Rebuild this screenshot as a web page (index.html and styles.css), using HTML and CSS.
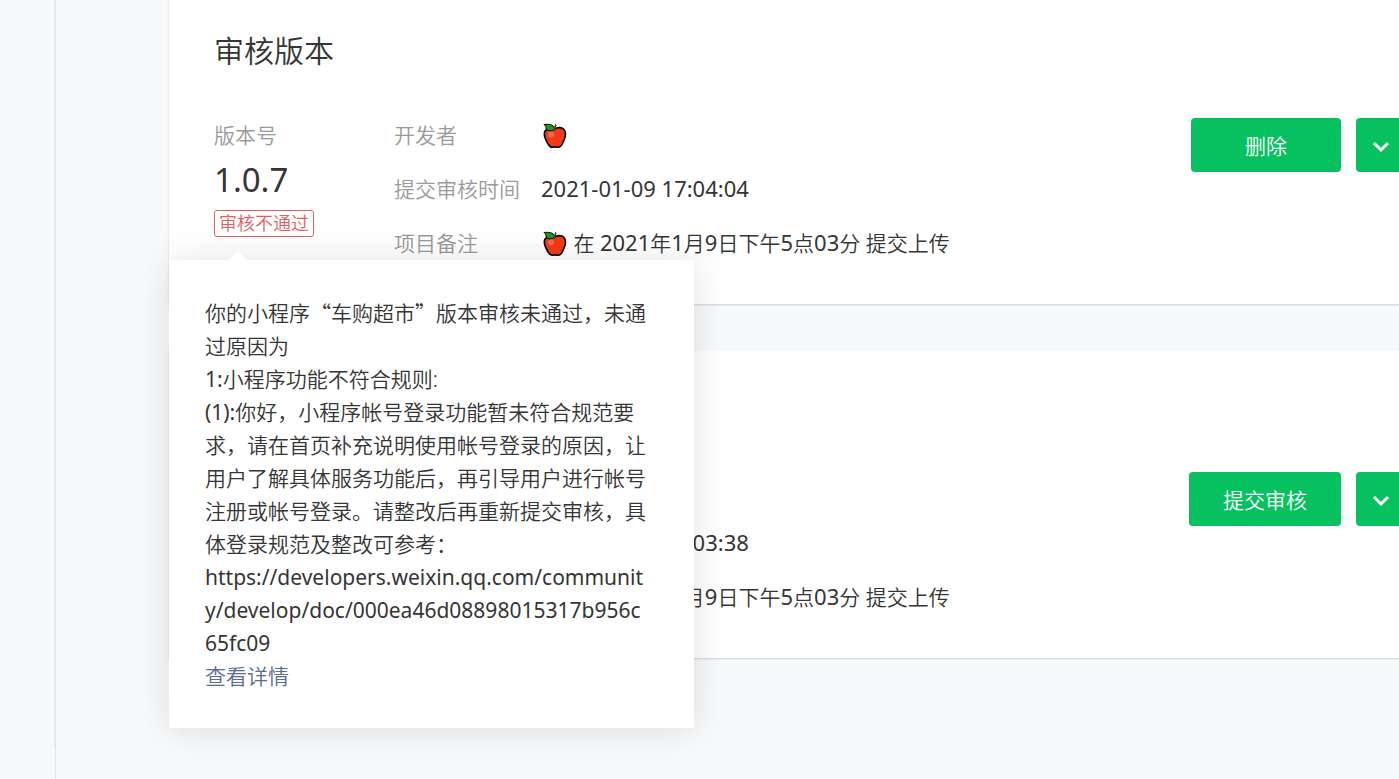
FILE: index.html
```html
<!DOCTYPE html>
<html lang="zh-CN">
<head>
    <meta charset="UTF-8">
    <meta name="viewport" content="width=device-width, initial-scale=1.0">
    <title>版本管理</title>
    <link rel="stylesheet" href="styles.css">
</head>
<body>
    <svg class="defs" aria-hidden="true">
        <symbol id="apple" viewBox="0 0 26 26">
            <path d="M12.5 6.200C15 4.200 19.500 3.800 22 6.500C24.800 9.800 23.300 15 21 19.500C19.500 22.800 17.800 24.800 15.500 24.200C14 23.800 12.500 23.800 11 24.200C8.500 24.800 6.800 22.500 5.200 19.500C3 15.500 1.500 11.500 2.800 8.500C4.500 5.500 8.500 4.500 12.500 6.200Z" fill="#f03a17" stroke="#000" stroke-width="1.600"/>
            <path d="M2 1.500C6 1.200 11.500 .8 12.900 6C10.500 8.500 5.500 8.300 4.200 6C4.200 4 3.200 2.500 2 1.500Z" fill="#13a10e" stroke="#000" stroke-width="1"/>
            <path d="M12.800 7.500C12.400 5 12.800 3.500 14 1.500" fill="none" stroke="#6b2c10" stroke-width="1.600"/>
            <circle cx="9" cy="11.500" r="3" fill="#f4694e"/>
        </symbol>
        <symbol id="arrow" viewBox="0 0 18 12">
            <path d="M2 2L9 9L16 2" fill="none" stroke="#fff" stroke-width="3"/>
        </symbol>
    </svg>
    <div class="page">
        <div class="sidebar"><div class="menu"></div></div>
        <main class="content">
            <section class="card">
                <h2>审核版本</h2>
                <div class="card-body">
                    <div class="version">
                        <div class="label">版本号</div>
                        <div class="number">1.0.7</div>
                        <div class="status">
                            <span class="tag">审核不通过</span>
                            <div class="popover">
                                你的小程序<span class="quote">“</span>车购超市<span class="quote">”</span>版本审核未通过，未通过原因为<br>
                                <span class="latin">1:</span>小程序功能不符合规则:<br>
                                <span class="latin">(1):</span>你好，小程序帐号登录功能暂未符合规范要求，请在首页补充说明使用帐号登录的原因，让用户了解具体服务功能后，再引导用户进行帐号注册或帐号登录。请整改后再重新提交审核，具体登录规范及整改可参考：<br>
                                <span class="latin">https://developers.weixin.qq.com/community/develop/doc/000ea46d08898015317b956c65fc09</span><br>
                                <a href="#">查看详情</a>
                            </div>
                        </div>
                    </div>
                    <dl class="info">
                        <dt>开发者</dt>
                        <dd><svg class="apple"><use href="#apple"/></svg></dd>
                        <dt>提交审核时间</dt>
                        <dd><span class="num">2021-01-09 17:04:04</span></dd>
                        <dt>项目备注</dt>
                        <dd><svg class="apple"><use href="#apple"/></svg> 在 <span class="num">2021</span>年<span class="num">1</span>月<span class="num">9</span>日下午<span class="num">5</span>点<span class="num">03</span>分 提交上传</dd>
                    </dl>
                    <div class="actions">
                        <button class="button" type="button">删除</button>
                        <button class="button more" type="button" aria-label="更多"><svg class="arrow"><use href="#arrow"/></svg></button>
                    </div>
                </div>
            </section>
            <section class="card">
                <h2>开发版本</h2>
                <div class="card-body">
                    <div class="version">
                        <div class="label">版本号</div>
                        <div class="number">1.0.7</div>
                    </div>
                    <dl class="info">
                        <dt>开发者</dt>
                        <dd><svg class="apple"><use href="#apple"/></svg></dd>
                        <dt>提交时间</dt>
                        <dd><span class="num">2021-01-09 17:03:38</span></dd>
                        <dt>项目备注</dt>
                        <dd><svg class="apple"><use href="#apple"/></svg> 在 <span class="num">2021</span>年<span class="num">1</span>月<span class="num">9</span>日下午<span class="num">5</span>点<span class="num">03</span>分 提交上传</dd>
                    </dl>
                    <div class="actions">
                        <button class="button" type="button">提交审核</button>
                        <button class="button more" type="button" aria-label="更多"><svg class="arrow"><use href="#arrow"/></svg></button>
                    </div>
                </div>
            </section>
        </main>
    </div>
</body>
</html>
```
FILE: styles.css
```css
body {
    margin: 0;
    background-color: #f7f9fb;
    color: #353535;
    font-family: "Noto Sans", "Noto Sans CJK SC", sans-serif;
    font-size: 21px;
    font-weight: 350;
    overflow: hidden;
}
.defs {
    position: absolute;
    width: 0;
    height: 0;
}
.page {
    display: flex;
    min-height: 100vh;
}
.sidebar {
    width: 55px;
    border-right: 1px solid #e4e6e9;
}
.menu {
    height: calc(100vh - 31px);
    border-right: 1px solid #e4e6e9;
}
.content {
    flex: 1;
    display: flex;
    flex-direction: column;
    gap: 46px;
    /* 卡片右侧超出窗口 */
    margin: -4px -52px 0 113px;
}
.card {
    background-color: #fff;
    padding: 34px 45px 42px;
    box-shadow: 0 1px 2px rgba(120, 120, 120, 0.3);
}
.card h2 {
    margin: 0 0 46px;
    font-size: 30px;
    font-weight: 350;
    line-height: 42px;
}
.card-body {
    display: flex;
}
.version {
    width: 180px;
    line-height: 34px;
}
.label,
.info dt {
    color: #9a9a9a;
}
.number {
    font-size: 33px;
    font-weight: 400;
    line-height: 56px;
}
.num {
    font-size: 22px;
    font-weight: 400;
    line-height: 1;
}
.latin {
    font-weight: 400;
}
.status {
    position: relative;
    display: flex;
    margin-top: 2px;
}
.tag {
    padding: 0 4px;
    border: 1px solid #e15f63;
    border-radius: 3px;
    color: #e15f63;
    font-size: 18px;
    line-height: 25px;
}
.popover {
    position: absolute;
    top: 50px;
    left: -45px;
    z-index: 1;
    box-sizing: border-box;
    width: 525px;
    padding: 37px 44px 35px 36px;
    background-color: #fff;
    border-radius: 3px;
    box-shadow: 0 2px 36px rgba(0, 0, 0, 0.12);
    line-height: 33px;
    word-break: break-all;
}
.popover::before {
    content: "";
    position: absolute;
    top: -9px;
    left: 60px;
    border: 9px solid transparent;
    border-top: 0;
    border-bottom-color: #fff;
}
.popover a {
    color: #576b95;
    text-decoration: none;
}
.quote {
    font-family: "Noto Sans CJK SC", sans-serif;
    line-height: 1;
}
.info {
    flex: 1;
    display: grid;
    grid-template-columns: 147px 1fr;
    grid-auto-rows: 36px;
    row-gap: 18px;
    margin: 0;
    line-height: 34px;
}
.info dd {
    margin: 0;
}
.apple {
    width: 26px;
    height: 26px;
    margin-left: 1px;
    vertical-align: -6px;
}
.actions {
    display: flex;
    align-items: flex-start;
    gap: 15px;
}
.button {
    min-width: 150px;
    height: 54px;
    padding: 0 34px;
    border: 0;
    border-radius: 4px;
    background-color: #07c160;
    color: #fff;
    font: inherit;
    cursor: pointer;
}
.button:hover {
    background-color: #06ad56;
}
.button.more {
    min-width: 50px;
    padding: 0;
}
.arrow {
    width: 18px;
    height: 12px;
}
```
